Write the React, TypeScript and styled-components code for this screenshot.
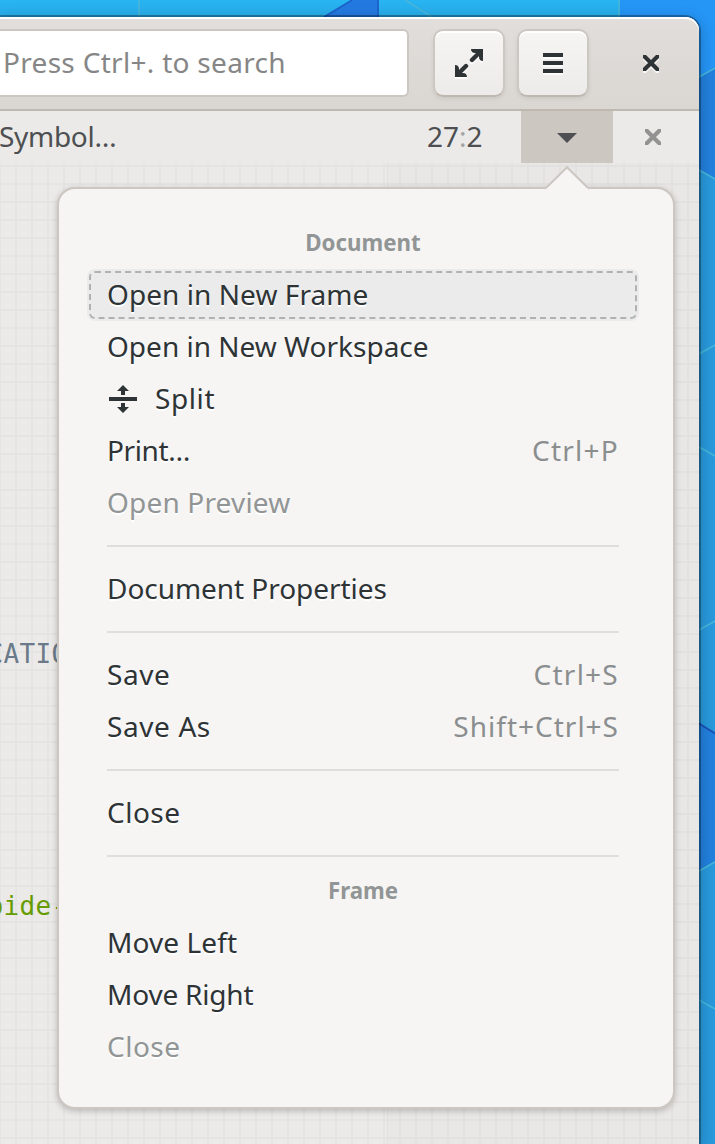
import React from 'react';
import styled, { createGlobalStyle } from 'styled-components';

const Global = createGlobalStyle`
  * { box-sizing: border-box; }
  html, body { margin: 0; padding: 0; }
  body { overflow: hidden; }
`;

const Desktop = styled.div`
  position: relative;
  width: 715px;
  height: 1144px;
  overflow: hidden;
  padding: 17px 16px 0 0;
  background: #2899dc;
  font: 400 28px/50px 'Noto Sans', 'Open Sans', sans-serif;
  color: #2e3436;
  white-space: nowrap;
`;

const Wallpaper = styled.svg`
  position: absolute;
  inset: 0;
`;

const Window = styled.div`
  position: relative;
  display: flex;
  flex-direction: column;
  height: 1127px;
  border-radius: 0 14px 0 0;
  box-shadow: 0 0 0 2px rgba(0, 0, 0, 0.3), 0 4px 16px rgba(0, 0, 0, 0.28);
  background: #ebeae8;
`;

const HeaderBar = styled.header`
  display: flex;
  align-items: center;
  height: 94px;
  padding-right: 20px;
  border-radius: 0 14px 0 0;
  border-bottom: 2px solid #bfb8b1;
  background: linear-gradient(#e1dedb, #dad6d2);
  box-shadow: inset 0 2px #fff;
`;

const SearchEntry = styled.div`
  width: 409px;
  height: 68px;
  padding-left: 3px;
  border: 2px solid #cdc7c2;
  border-left: 0;
  border-radius: 0 6px 6px 0;
  background: #fff;
  color: #868686;
  line-height: 62px;
  letter-spacing: 0.3px;
`;

const HeaderButton = styled.button<{ $gap: number }>`
  display: grid;
  place-items: center;
  width: 72px;
  height: 68px;
  margin-left: ${(p) => p.$gap}px;
  padding: 0;
  border: 2px solid #cdc7c2;
  border-bottom-color: #bfb8b1;
  border-radius: 10px;
  background: linear-gradient(#f6f5f4, #edebe9);
  background-clip: padding-box;
  box-shadow: inset 0 2px #fff, 0 2px 4px rgba(0, 0, 0, 0.07);
  color: #2e3436;
`;

const WindowClose = styled.div`
  margin-left: 54px;
  height: 16px;
  line-height: 0;
`;

const Glyph = styled.svg<{ $lit?: boolean }>`
  display: block;
  filter: ${(p) => (p.$lit ? 'drop-shadow(0 2px 0 rgba(255,255,255,0.8))' : 'none')};
`;

const DocumentBar = styled.div`
  display: flex;
  align-items: center;
  height: 52px;
  color: #4d4f52;
`;

const SymbolLabel = styled.div`
  flex: 1;
  height: 52px;
  margin-left: -1px;
  letter-spacing: -0.3px;
`;

const Cursor = styled.div`
  width: 94px;
  height: 52px;
  span { color: #a3a3a3; }
`;

const MenuToggle = styled.div`
  display: grid;
  place-items: center;
  width: 92px;
  height: 52px;
  padding-top: 2px;
  background: #cdc7c2;
`;

const BarClose = styled.div`
  display: flex;
  width: 86px;
  padding-left: 32px;
`;

const Editor = styled.div`
  position: relative;
  flex: 1;
  padding-top: 465px;
  overflow: hidden;
  background:
    linear-gradient(90deg, transparent 387px, #e1e0de 387px, #e1e0de 388px, rgba(0, 0, 0, 0.01) 388px),
    repeating-linear-gradient(90deg, #e5e4e2 0 1px, transparent 1px 15px, #e5e4e2 15px 16px),
    repeating-linear-gradient(transparent 0 2px, #e5e4e2 2px 4px, transparent 4px 18px),
    #ebeae8;
`;

const CodeLine = styled.div<{ $color: string }>`
  height: 252px;
  margin-left: -12.5px;
  color: ${(p) => p.$color};
  font: 26px/52px 'DejaVu Sans Mono', 'Liberation Mono', monospace;
  letter-spacing: 0.35px;
`;

const Popover = styled.div`
  position: absolute;
  left: 57px;
  top: 187px;
  width: 618px;
  height: 922px;
  padding: 28px 34px 34px 28px;
  border: 2px solid #cdc7c2;
  border-radius: 18px;
  background: #f6f5f4;
  box-shadow: 0 2px 6px rgba(0, 0, 0, 0.22);
`;

const Tail = styled.svg`
  position: absolute;
  left: 484px;
  top: -24px;
`;

const Title = styled.div<{ $afterRule?: boolean }>`
  height: 52px;
  margin-top: ${(p) => (p.$afterRule ? -8 : 0)}px;
  text-align: center;
  color: #929595;
  font-size: 22.3px;
  font-weight: 700;
  line-height: 52px;
`;

const Item = styled.div<{ $focused?: boolean; $disabled?: boolean; $track?: number }>`
  display: flex;
  height: 52px;
  padding: 0 20px;
  border-radius: 8px;
  background: ${(p) => (p.$focused ? '#ebebeb' : 'transparent')};
  outline: ${(p) => (p.$focused ? '2px dashed #b0b2b2' : 'none')};
  outline-offset: -4px;
  color: ${(p) => (p.$disabled ? '#929595' : '#2e3436')};
  letter-spacing: ${(p) => p.$track ?? 0}px;
  text-shadow: 0 2px #fff;
`;

const ItemIcon = styled.span`
  width: 48px;
  padding: 12px 0 0 2px;
`;

const Shortcut = styled.span<{ $track: number }>`
  margin-left: auto;
  color: #8b8e8f;
  letter-spacing: ${(p) => p.$track}px;
  text-shadow: none;
`;

const Rule = styled.hr`
  height: 2px;
  margin: 16px 20px;
  border: 0;
  background: #dededc;
`;

const Cross = ({ color, lit }: { color: string; lit?: boolean }) => (
  <Glyph $lit={lit} width="16" height="16" viewBox="0 0 16 16">
    <path d="M-1 -1 L17 17 M17 -1 L-1 17" stroke={color} strokeWidth="4.2" />
  </Glyph>
);

export default function App() {
  return (
    <Desktop>
      <Global />
      <Wallpaper width="715" height="1144">
        <defs>
          <linearGradient id="sky" x2="0" y2="1">
            <stop offset="0" stopColor="#28b4f2" />
            <stop offset="1" stopColor="#28a6e2" />
          </linearGradient>
        </defs>
        <rect width="715" height="30" fill="url(#sky)" />
        <path d="M324 17 L352 0 H379 V17 Z" fill="#2479e0" />
        <path d="M324 17 L352 0 M378 0V17" stroke="#1a5fc8" strokeWidth="1.5" />
        <path d="M619 0 H715 V172 L699 160 V60 L619 40 Z" fill="#2595f6" />
        <path d="M699 76 L715 67 V179 L699 170 Z" fill="#2280dd" />
        <path d="M699 724 L715 734 V861 L699 871 Z" fill="#2280dd" />
        <path d="M699 723.5 L715 733.5" stroke="#1a52b8" strokeWidth="2" fill="none" />
        <path
          d="M139 0V17 M619 0V17 M405 0L432 17 M699 77L715 68 M699 170L715 179 M699 354L715 345 M699 447L715 456 M699 630L715 621 M699 871L715 862 M699 1000L715 1009"
          stroke="#45b5dc"
          strokeWidth="1.8"
          fill="none"
        />
      </Wallpaper>
      <Window>
        <HeaderBar>
          <SearchEntry>Press Ctrl+. to search</SearchEntry>
          <HeaderButton $gap={24}>
            <Glyph $lit width="28" height="28" viewBox="0 0 28 28" fill="#2e3436">
              <path d="M16 0H28V12C25.5 12 24 10.5 24 8V4H20C17.5 4 16 2.5 16 0Z M12 28H0V16C2.5 16 4 17.5 4 20V24H8C10.5 24 12 25.5 12 28Z" />
              <path d="M17 11L25 3 M11 17L3 25" stroke="#2e3436" strokeWidth="4.4" strokeLinecap="round" />
            </Glyph>
          </HeaderButton>
          <HeaderButton $gap={12}>
            <Glyph $lit width="20" height="20" viewBox="0 0 20 20" fill="#2e3436">
              <path d="M0 0H20V4H0Z M0 8H20V12H0Z M0 16H20V20H0Z" />
            </Glyph>
          </HeaderButton>
          <WindowClose>
            <Cross color="#2e3436" lit />
          </WindowClose>
        </HeaderBar>
        <DocumentBar>
          <SymbolLabel>Symbol…</SymbolLabel>
          <Cursor>27<span>:</span>2</Cursor>
          <MenuToggle>
            <Glyph width="20" height="10" viewBox="0 0 20 10">
              <path d="M0 0H20L10 10Z" fill="#4d4f52" />
            </Glyph>
          </MenuToggle>
          <BarClose>
            <Cross color="#929292" />
          </BarClose>
        </DocumentBar>
        <Editor>
          <CodeLine $color="#6a7a8a">CATION</CodeLine>
          <CodeLine $color="#669c00">bide-</CodeLine>
        </Editor>
      </Window>
      <Popover>
        <Tail width="48" height="26" viewBox="0 0 48 26">
          <path d="M2 24 L24 2.2 L46 24" fill="#f6f5f4" stroke="#cdc7c2" strokeWidth="2" />
          <path d="M3 23.6H45V26H3Z" fill="#f6f5f4" />
        </Tail>
        <Title>Document</Title>
        <Item $focused $track={0.06}>Open in New Frame</Item>
        <Item>Open in New Workspace</Item>
        <Item $track={0.6}>
          <ItemIcon>
            <Glyph width="28" height="28" viewBox="0 0 28 28" fill="#2e3436">
              <path d="M0 12H28V16H0Z M14 0L20 6H16V10H12V6H8Z M14 28L8 22H12V18H16V22H20Z" />
            </Glyph>
          </ItemIcon>
          Split
        </Item>
        <Item $track={-0.4}>Print…<Shortcut $track={1.25}>Ctrl+P</Shortcut></Item>
        <Item $disabled $track={0.17}>Open Preview</Item>
        <Rule />
        <Item $track={-0.05}>Document Properties</Item>
        <Rule />
        <Item $track={0.6}>Save<Shortcut $track={1.25}>Ctrl+S</Shortcut></Item>
        <Item $track={0.6}>Save As<Shortcut $track={1}>Shift+Ctrl+S</Shortcut></Item>
        <Rule />
        <Item $track={0.5}>Close</Item>
        <Rule />
        <Title $afterRule>Frame</Title>
        <Item $track={0.1}>Move Left</Item>
        <Item $track={-0.2}>Move Right</Item>
        <Item $disabled $track={0.5}>Close</Item>
      </Popover>
    </Desktop>
  );
}
